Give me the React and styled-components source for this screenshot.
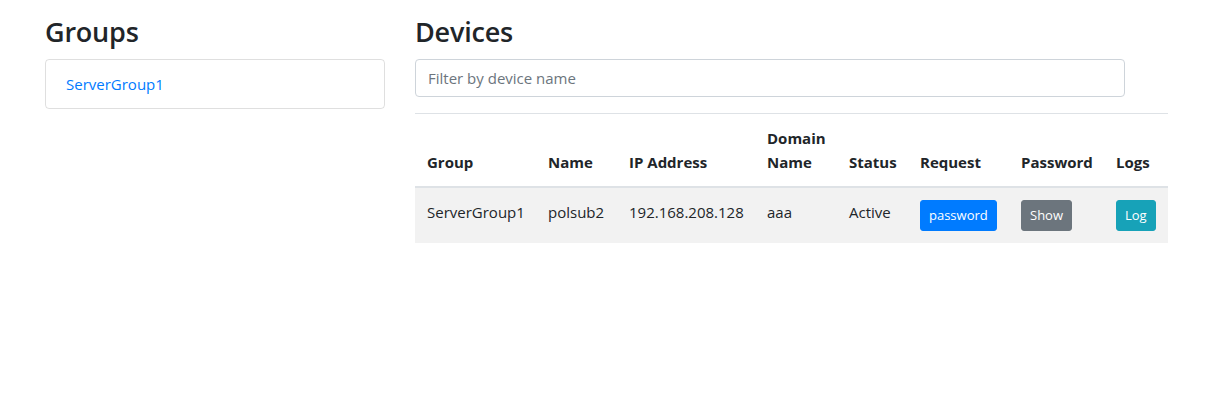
import React from "react";
import styled, { createGlobalStyle } from "styled-components";

const GlobalStyle = createGlobalStyle`
  body {
    margin: 0;
    background: #fff;
    color: #212529;
    font-family: "Open Sans", "Noto Sans", sans-serif;
    font-size: 15px;
    line-height: 24px;
  }
  * { box-sizing: border-box; }
`;

const Page = styled.div`
  display: flex;
  gap: 30px;
  padding: 13px 0 0 45px;
`;

const GroupsColumn = styled.div`
  width: 340px;
`;

const DevicesColumn = styled.div`
  width: 753px;
`;

const Heading = styled.h2`
  margin: 0 0 8px;
  font-size: 27px;
  font-weight: 600;
  line-height: 38px;
  letter-spacing: -0.2px;
`;

const ListGroup = styled.div`
  border: 1px solid rgba(0, 0, 0, 0.125);
  border-radius: 4px;
`;

const ListItem = styled.a`
  display: block;
  padding: 12px 20px;
  color: #007bff;
  text-decoration: none;
`;

const FilterInput = styled.input`
  display: block;
  width: 710px;
  height: 38px;
  padding: 6px 12px;
  margin-bottom: 16px;
  border: 1px solid #ced4da;
  border-radius: 4px;
  font: inherit;
  color: #495057;
  &::placeholder {
    color: #6c757d;
  }
`;

const Table = styled.table`
  width: 100%;
  table-layout: fixed;
  border-collapse: collapse;
`;

const Th = styled.th`
  padding: 12px;
  text-align: left;
  vertical-align: bottom;
  font-weight: 700;
  border-top: 1px solid #dee2e6;
  border-bottom: 2px solid #dee2e6;
`;

const Row = styled.tr`
  background: ${(p) => (p.$striped ? "rgba(0, 0, 0, 0.05)" : "transparent")};
`;

const Td = styled.td`
  padding: 12px;
  vertical-align: top;
  white-space: nowrap;
`;

const Button = styled.button`
  display: inline-block;
  height: 31px;
  padding: 0 8px;
  border: 1px solid ${(p) => p.$color};
  border-radius: 3px;
  background: ${(p) => p.$color};
  color: #fff;
  font-family: inherit;
  font-size: 13px;
  line-height: 29px;
  cursor: pointer;
`;

const columns = [
  { label: "Group", width: 121 },
  { label: "Name", width: 81 },
  { label: "IP Address", width: 138 },
  { label: "Domain Name", width: 82 },
  { label: "Status", width: 71 },
  { label: "Request", width: 101 },
  { label: "Password", width: 95 },
  { label: "Logs", width: 64 },
];

const devices = [
  {
    group: "ServerGroup1",
    name: "polsub2",
    ip: "192.168.208.128",
    domain: "aaa",
    status: "Active",
  },
];

export default function App() {
  return (
    <>
      <GlobalStyle />
      <Page>
        <GroupsColumn>
          <Heading>Groups</Heading>
          <ListGroup>
            <ListItem href="#">ServerGroup1</ListItem>
          </ListGroup>
        </GroupsColumn>
        <DevicesColumn>
          <Heading>Devices</Heading>
          <FilterInput placeholder="Filter by device name" />
          <Table>
            <colgroup>
              {columns.map((c) => (
                <col key={c.label} style={{ width: c.width }} />
              ))}
            </colgroup>
            <thead>
              <tr>
                {columns.map((c) => (
                  <Th key={c.label}>{c.label}</Th>
                ))}
              </tr>
            </thead>
            <tbody>
              {devices.map((d, i) => (
                <Row key={d.name} $striped={i % 2 === 0}>
                  <Td>{d.group}</Td>
                  <Td>{d.name}</Td>
                  <Td>{d.ip}</Td>
                  <Td>{d.domain}</Td>
                  <Td>{d.status}</Td>
                  <Td>
                    <Button $color="#007bff">password</Button>
                  </Td>
                  <Td>
                    <Button $color="#6c757d">Show</Button>
                  </Td>
                  <Td>
                    <Button $color="#17a2b8">Log</Button>
                  </Td>
                </Row>
              ))}
            </tbody>
          </Table>
        </DevicesColumn>
      </Page>
    </>
  );
}
